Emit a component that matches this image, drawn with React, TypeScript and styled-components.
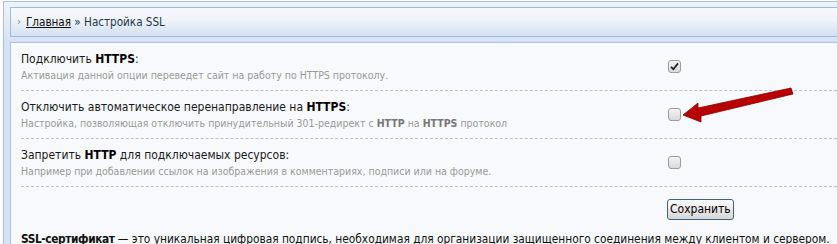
import React from "react";
import styled, { createGlobalStyle } from "styled-components";

const GlobalStyle = createGlobalStyle`
  html, body {
    margin: 0;
    padding: 0;
    background: #ffffff;
    overflow: hidden;
  }
`;

const Frame = styled.div`
  margin: 1px 0 0 3px;
  border-left: 1px solid #a9bfe0;
  border-top: 1px solid #a9bfe0;
  padding: 5px 0 0 6px;
  background: linear-gradient(#eef3fa 0px, #e4ecf8 20px, #d4e2f5 40px);
  font-family: "DejaVu Sans Condensed", "DejaVu Sans", sans-serif;
`;

const Breadcrumb = styled.div`
  height: 28px;
  display: flex;
  align-items: center;
  gap: 5px;
  padding-left: 6px;
  border: 1px solid #9fbbe2;
  border-right: none;
  background: linear-gradient(#f7f9fd 0%, #f0f4fa 40%, #d3e0f2 100%);
  font-size: 11.6px;
  color: #243650;
`;

const Chevron = styled.span`
  color: #6d8bb5;
  font-size: 11px;
  margin-top: -1px;
`;

const Crumb = styled.a`
  color: #111111;
  text-decoration: underline;
`;

const Panel = styled.div`
  position: relative;
  margin-top: 5px;
  border: 1px solid #a9c0e0;
  border-right: none;
  border-bottom: none;
  background: #f7f9fd;
  padding: 0 0 0 10px;
  height: 210px;
  overflow: hidden;
`;

const Row = styled.div`
  display: grid;
  grid-template-columns: 647px 1fr;
  align-items: center;
  height: 47px;
  border-bottom: 1px dashed #b3c4da;
`;

const Title = styled.div`
  font-size: 12px;
  color: #1a1a1a;
  line-height: 16px;

  b {
    color: #000;
  }
`;

const Hint = styled.div`
  font-size: 10.5px;
  color: #9a9a9a;
  line-height: 16px;

  b {
    color: #777;
  }
`;

const Check = styled.span<{ $checked?: boolean }>`
  width: 11px;
  height: 11px;
  border: 1px solid #9c9c9c;
  border-radius: 3px;
  background: linear-gradient(#f4f4f4, #d9d9d9);
  display: flex;
  align-items: center;
  justify-content: center;
`;

const Actions = styled.div`
  padding: 11px 0 0 646px;
`;

const Button = styled.button`
  height: 21px;
  padding: 0 2px;
  border: 1px solid #3f5f85;
  border-radius: 3px;
  background: linear-gradient(#fbfbfb, #e6e6e6 60%, #d6d6d6);
  font-family: "DejaVu Sans Condensed", "DejaVu Sans", sans-serif;
  font-size: 12px;
  color: #000;
`;

const About = styled.p`
  margin: 12px 0 0;
  font-family: "DejaVu Sans Condensed", "DejaVu Sans", sans-serif;
  font-size: 11.8px;
  color: #111;
  white-space: nowrap;

  b {
    letter-spacing: -0.4px;
  }
`;

const Arrow = styled.svg`
  position: absolute;
  left: 670px;
  top: 44px;
`;

const options = [
  {
    title: <>Подключить <b>HTTPS</b>:</>,
    hint: <>Активация данной опции переведет сайт на работу по HTTPS протоколу.</>,
    checked: true,
  },
  {
    title: <>Отключить автоматическое перенаправление на <b>HTTPS</b>:</>,
    hint: <>Настройка, позволяющая отключить принудительный 301-редирект с <b>HTTP</b> на <b>HTTPS</b> протокол</>,
    checked: false,
  },
  {
    title: <>Запретить <b>HTTP</b> для подключаемых ресурсов:</>,
    hint: <>Например при добавлении ссылок на изображения в комментариях, подписи или на форуме.</>,
    checked: false,
  },
];

export default function App() {
  return (
    <>
      <GlobalStyle />
      <Frame>
        <Breadcrumb>
          <Chevron>›</Chevron>
          <span>
            <Crumb>Главная</Crumb> » Настройка SSL
          </span>
        </Breadcrumb>
        <Panel>
          {options.map((o, i) => (
            <Row key={i}>
              <div>
                <Title>{o.title}</Title>
                <Hint>{o.hint}</Hint>
              </div>
              <Check $checked={o.checked}>
                {o.checked && (
                  <svg width="9" height="9" viewBox="0 0 9 9">
                    <path d="M1 4.8 L3.4 7.2 L8 1.4" fill="none" stroke="#222" strokeWidth="1.8" />
                  </svg>
                )}
              </Check>
            </Row>
          ))}
          <Actions>
            <Button>Сохранить</Button>
          </Actions>
          <About>
            <b>SSL-сертификат</b> — это уникальная цифровая подпись, необходимая для организации защищенного соединения между клиентом и сервером.
          </About>
          <Arrow width="120" height="40" viewBox="0 0 120 40">
            <polygon
              points="2,28 17,16 17,21 110,1 112,7 20,29 20,35"
              fill="#b80000"
              stroke="#8a0000"
              strokeWidth="0.8"
              strokeLinejoin="round"
            />
          </Arrow>
        </Panel>
      </Frame>
    </>
  );
}
